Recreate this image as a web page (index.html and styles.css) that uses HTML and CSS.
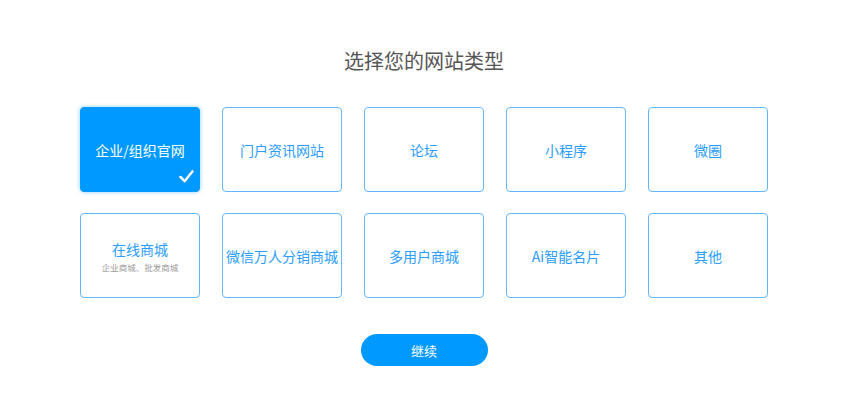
FILE: index.html
```html
<!DOCTYPE html>
<html lang="zh">
<head>
<meta charset="utf-8">
<title>选择您的网站类型</title>
<link rel="stylesheet" href="styles.css">
</head>
<body>
<div class="page">
  <h1 class="title">选择您的网站类型</h1>
  <div class="grid">
    <div class="card active">
      <span class="name">企业/组织官网</span>
      <svg class="check" viewBox="0 0 16 16" width="15" height="15"><path d="M1.5 8.5 L6 13 L14.5 2.5" fill="none" stroke="#fff" stroke-width="2.6" stroke-linecap="round" stroke-linejoin="round"/></svg>
    </div>
    <div class="card"><span class="name">门户资讯网站</span></div>
    <div class="card"><span class="name">论坛</span></div>
    <div class="card"><span class="name">小程序</span></div>
    <div class="card"><span class="name">微圈</span></div>
    <div class="card"><span class="name">在线商城</span><span class="sub">企业商城、批发商城</span></div>
    <div class="card"><span class="name">微信万人分销商城</span></div>
    <div class="card"><span class="name">多用户商城</span></div>
    <div class="card"><span class="name">Ai智能名片</span></div>
    <div class="card"><span class="name">其他</span></div>
  </div>
  <button class="btn">继续</button>
</div>
</body>
</html>
```
FILE: styles.css
```css
html, body {
  margin: 0;
  padding: 0;
  background: #fff;
}
body {
  font-family: "Noto Sans CJK SC", "Noto Sans", sans-serif;
}
.page {
  width: 848px;
  display: flex;
  flex-direction: column;
  align-items: center;
}
.title {
  margin: 47px 0 0;
  font-size: 20px;
  line-height: 28px;
  font-weight: 400;
  color: #555;
}
.grid {
  margin-top: 32px;
  display: grid;
  grid-template-columns: repeat(5, 120px);
  grid-auto-rows: 85px;
  column-gap: 22px;
  row-gap: 21px;
}
.card {
  position: relative;
  box-sizing: border-box;
  border: 1px solid #62b8ff;
  border-radius: 4px;
  background: #fff;
  display: flex;
  flex-direction: column;
  align-items: center;
  justify-content: center;
  color: #2a9dff;
}
.name {
  font-size: 14px;
  line-height: 20px;
  white-space: nowrap;
}
.sub {
  font-size: 8.5px;
  line-height: 12px;
  color: #999;
  margin-top: 2px;
}
.card.active {
  background: #0099ff;
  border-color: #0099ff;
  color: #fff;
  box-shadow: 0 0 4px rgba(0, 153, 255, 0.45);
}
.check {
  position: absolute;
  right: 5px;
  bottom: 7px;
}
.btn {
  margin-top: 36px;
  width: 127px;
  height: 32px;
  border: none;
  border-radius: 16px;
  background: #0099ff;
  color: #fff;
  font-family: "Noto Sans CJK SC", sans-serif;
  font-size: 13px;
  padding: 0;
}
```
